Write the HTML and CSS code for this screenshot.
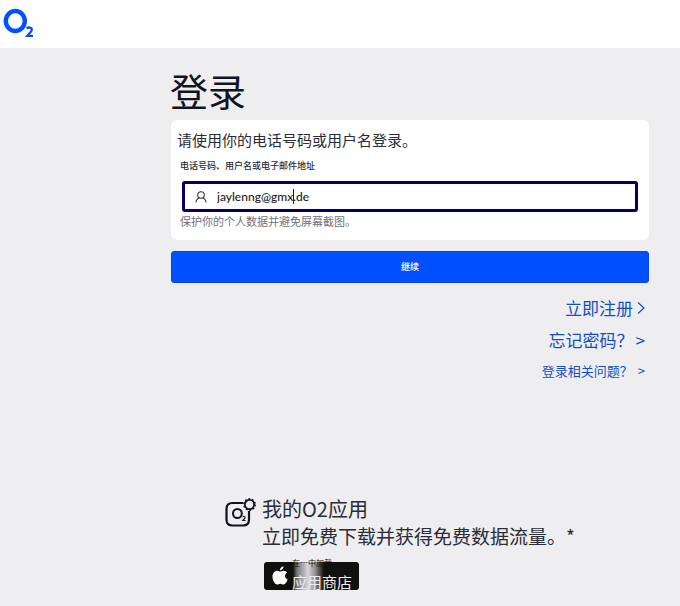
FILE: index.html
```html
<!DOCTYPE html>
<html lang="zh-CN">
<head>
<meta charset="utf-8">
<title>登录</title>
<link rel="stylesheet" href="styles.css">
</head>
<body>
<header class="topbar">
  <a class="logo" href="#" aria-label="O2">
    <svg width="34" height="32" viewBox="0 0 34 32">
      <ellipse cx="12.300" cy="13" rx="9.500" ry="10" fill="none" stroke="#0050ff" stroke-width="4.400"/>
      <path d="M23.600 20.500c1.800-1.600 5.200-1.300 5.200 1.200 0 2.300-3 3.800-4.600 6.100h5.800" fill="none" stroke="#0a4fe0" stroke-width="2.300"/>
    </svg>
  </a>
</header>
<main class="page">
  <h1 class="title">登录</h1>
  <form class="login">
    <div class="card">
      <p class="intro">请使用你的电话号码或用户名登录。</p>
      <label class="label" for="user">电话号码、用户名或电子邮件地址</label>
      <div class="field">
        <svg width="12" height="12" viewBox="0 0 12 12" fill="none" stroke="#333" stroke-width="1.1">
          <circle cx="6" cy="4" r="3.300"/>
          <path d="M1 11.500C1 9 2.500 7.500 4.300 6.900M11 11.500C11 9 9.500 7.500 7.700 6.900"/>
        </svg>
        <input class="input" id="user" type="text" value="jaylenng@gmx.de">
        <span class="caret"></span>
      </div>
      <p class="hint">保护你的个人数据并避免屏幕截图。</p>
    </div>
    <button class="submit" type="submit">继续</button>
  </form>
  <nav class="links">
    <a href="#">立即注册<svg width="8" height="14" viewBox="0 0 8 14" fill="none" stroke="currentColor" stroke-width="1.200"><path d="M1 1.500L7 7L1 12.500"/></svg></a>
    <a class="tight" href="#">忘记密码？<span>&gt;</span></a>
    <a class="small" href="#">登录相关问题？<span>&gt;</span></a>
  </nav>
  <section class="app">
    <svg class="app-icon" width="32" height="32" viewBox="0 0 32 32" fill="none" stroke="#10121c">
      <path d="M18 6H7.500Q1.500 6 1.500 12V22.500Q1.500 28.500 7.500 28.500H18Q24 28.500 24 22.500V14" stroke-width="2.200"/>
      <circle cx="24.500" cy="7.500" r="4.600" stroke-width="1.800"/>
      <circle cx="24.500" cy="7.500" r="5.700" stroke-width="1.400" stroke-dasharray="1.800 1.780"/>
      <ellipse cx="12.400" cy="16.500" rx="4.400" ry="4.600" stroke-width="2"/>
      <path d="M17.800 20c.8-1 2.400-.6 2.200.6-.1 1-1.400 1.700-2.200 2.900h2.700" stroke-width="1.100"/>
    </svg>
    <div class="app-text">
      <h2 class="app-title">我的O2应用</h2>
      <p class="app-copy">立即免费下载并获得免费数据流量。<span>*</span></p>
      <a class="store" href="#">
        <svg width="16" height="20" viewBox="0 0 16 20" fill="#fff">
          <path d="M8.200 5.600C9 5.600 10 4.700 11.600 4.700c1.400 0 2.700.7 3.500 1.900-3 1.700-2.600 5.700.6 7-.8 2.200-2.400 5-4.200 5-1.300 0-1.700-.8-3.200-.8s-2 .8-3.200.8C2.800 18.600.5 14.400.5 10.800c0-3.800 2.300-6 4.600-6 1.400 0 2.400.8 3.100.8z"/>
          <path d="M8 4.300C7.900 2.200 9.600.4 11.500.2 11.700 2.300 9.900 4.200 8 4.300z"/>
        </svg>
        <span class="store-small">在…中加载</span>
        <span class="store-name">应用商店</span>
      </a>
    </div>
  </section>
</main>
</body>
</html>
```
FILE: styles.css
```css
* { box-sizing: border-box; }
body {
  margin: 0;
  min-height: 100vh;
  background: #eeeef1;
  color: #2a2c36;
  font-family: "Noto Sans CJK SC", sans-serif;
}
h1, h2, p { margin: 0; font-weight: 400; }
svg { display: block; flex: none; }
a { text-decoration: none; }
.topbar { height: 48px; padding: 8px 3px; background: #fff; }
.logo { display: inline-block; }
.page { padding: 18px 31px 0 25%; }
.title { font-size: 38px; line-height: 48px; color: #12141f; }
.login { margin-left: 1px; }
.card {
  margin-top: 6px;
  padding: 8px 11px 10px;
  border-radius: 6px;
  background: #fff;
}
.intro { margin-left: -5px; font-size: 15px; line-height: 24px; white-space: nowrap; }
.label { display: block; margin: 7px 0 8px -2px; font-size: 9px; font-weight: 500; line-height: 14px; }
.field {
  position: relative;
  display: flex;
  align-items: center;
  gap: 10px;
  height: 31px;
  padding: 0 10px;
  border: 3px solid #04006a;
  border-radius: 3px;
}
.input {
  flex: 1;
  min-width: 0;
  padding: 0;
  border: 0;
  outline: 0;
  background: none;
  color: #1c1c24;
  font-family: Lato, sans-serif;
  font-size: 12px;
  font-weight: 500;
}
.caret { position: absolute; left: 108px; top: 5px; width: 1px; height: 15px; background: #222; }
.hint { margin-left: -2px; font-size: 11px; line-height: 18px; color: #70707c; }
.submit {
  display: block;
  width: 100%;
  height: 32px;
  margin-top: 11px;
  padding: 0 0 2px;
  border: 1px solid #0848df;
  border-radius: 3px;
  background: #0050ff;
  color: #fff;
  font-family: inherit;
  font-size: 9px;
  font-weight: 500;
}
.links {
  display: flex;
  flex-direction: column;
  align-items: flex-end;
  margin: 9px 4px 0 0;
}
.links a { display: flex; align-items: center; gap: 4px; font-size: 17px; line-height: 32px; color: #1450bd; }
.links .tight { gap: 2px; }
.links .small { gap: 5px; font-size: 13px; line-height: 30px; }
.app { display: flex; gap: 5px; margin: 109px 0 0 55px; }
.app-icon { margin-top: 2px; }
.app-title { font-size: 20px; line-height: 28px; }
.app-copy { font-size: 19px; line-height: 26px; white-space: nowrap; }
.store {
  position: relative;
  display: flex;
  align-items: center;
  width: 95px;
  height: 28px;
  margin: 13px 0 0 2px;
  padding-left: 8px;
  border-radius: 3px;
  background: linear-gradient(90deg, #10110d 29px, #77777a 33px, #d8d8dc 44px, #929295 51px, #10110d 60px);
}
.store-small { position: absolute; left: 28px; top: -5px; font-size: 8px; line-height: 12px; color: #10110d; white-space: nowrap; }
.store-name { position: absolute; left: 28px; top: 10px; font-size: 15px; line-height: 20px; color: #eee; white-space: nowrap; }
```
